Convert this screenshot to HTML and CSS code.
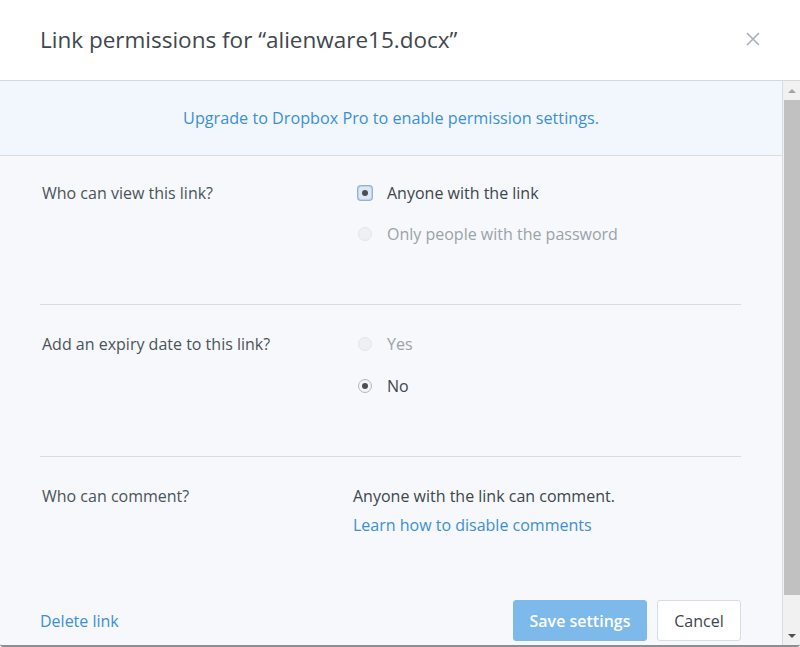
FILE: index.html
```html
<!DOCTYPE html>
<html>
<head>
<meta charset="utf-8">
<link rel="stylesheet" href="styles.css">
</head>
<body>
<div class="dialog">
  <header class="header">
    <h1 class="title">Link permissions for “alienware15.docx”</h1>
    <button class="close" aria-label="Close">
      <svg width="14" height="14" viewBox="0 0 14 14"><path d="M1 1L13 13M13 1L1 13" stroke="#a9b0b6" stroke-width="1.6" fill="none"/></svg>
    </button>
  </header>
  <div class="main">
    <div class="content">
      <div class="banner"><a class="link" href="#">Upgrade to Dropbox Pro to enable permission settings.</a></div>
      <div class="section section-first">
        <div class="label">Who can view this link?</div>
        <div class="options">
          <div class="option"><span class="radio checked focused"></span><span>Anyone with the link</span></div>
          <div class="option disabled"><span class="radio"></span><span>Only people with the password</span></div>
        </div>
      </div>
      <div class="section">
        <div class="label">Add an expiry date to this link?</div>
        <div class="options">
          <div class="option disabled"><span class="radio"></span><span>Yes</span></div>
          <div class="option"><span class="radio checked"></span><span>No</span></div>
        </div>
      </div>
      <div class="section section-last">
        <div class="label">Who can comment?</div>
        <div class="comment">
          <div>Anyone with the link can comment.</div>
          <a class="link learn" href="#">Learn how to disable comments</a>
        </div>
      </div>
      <div class="footer">
        <a class="link" href="#">Delete link</a>
        <div class="buttons">
          <button class="btn btn-primary">Save settings</button>
          <button class="btn btn-secondary">Cancel</button>
        </div>
      </div>
    </div>
    <div class="scrollbar">
      <div class="sb-arrow"><span class="tri up"></span></div>
      <div class="sb-thumb"></div>
      <div class="sb-track"></div>
      <div class="sb-arrow"><span class="tri down"></span></div>
    </div>
  </div>
</div>
</body>
</html>
```

FILE: styles.css
```css
* { box-sizing: border-box; }
html, body { margin: 0; padding: 0; }
body {
  font-family: "Open Sans", "Noto Sans", sans-serif;
  color: #3d464d;
  background: #ffffff;
}
.dialog {
  width: 800px;
  height: 647px;
  display: flex;
  flex-direction: column;
  border-bottom: 2px solid #8c8f92;
  border-radius: 0 0 3px 3px;
  overflow: hidden;
}
.header {
  height: 81px;
  flex: none;
  display: flex;
  align-items: center;
  justify-content: space-between;
  padding: 0 40px 2px 40px;
  border-bottom: 1px solid #d3d8dd;
  background: #fff;
}
.title {
  margin: 0;
  font-size: 22.5px;
  font-weight: 400;
  color: #40474d;
}
.close {
  border: 0;
  background: none;
  padding: 0;
  width: 14px;
  height: 14px;
  display: flex;
}
.main {
  flex: 1;
  display: flex;
  min-height: 0;
}
.content {
  flex: 1;
  display: flex;
  flex-direction: column;
  background: #f6f8fb;
  border-right: 1px solid #d6dce2;
}
.link {
  color: #3d8fd6;
  text-decoration: none;
  font-size: 16px;
}
.banner {
  height: 75px;
  flex: none;
  display: flex;
  align-items: center;
  justify-content: center;
  background: #f1f7fd;
  border-bottom: 1px solid #d6dde4;
  padding-bottom: 1px;
}
.banner .link { font-size: 16.2px; }
.section {
  display: grid;
  grid-template-columns: 313px 1fr;
  margin: 0 41px 0 40px;
  padding: 28px 0 59px 0;
  border-bottom: 1px solid #d8dde2;
  font-size: 16px;
  line-height: 22px;
}
.section-first { padding: 26px 0 59px 0; }
.section-first .options { gap: 19px; }
.section-last { border-bottom: 0; padding-bottom: 0; }
.label { color: #4b5359; padding-left: 2px; }
.options {
  display: flex;
  flex-direction: column;
  gap: 20px;
}
.option {
  display: flex;
  align-items: center;
  gap: 15px;
  padding-left: 5px;
  color: #3d464d;
}
.option.disabled { color: #9ba2a8; }
.radio {
  width: 14px;
  height: 14px;
  border-radius: 50%;
  border: 1px solid #dadde0;
  background: radial-gradient(circle at 50% 40%, #ffffff 0%, #eceef0 100%);
  position: relative;
  flex: none;
}
.option.disabled .radio { border-color: #e3e6e9; background: #eef0f2; }
.radio.checked { border-color: #b4b8bc; background: #f4f5f6; }
.radio.checked::after {
  content: "";
  position: absolute;
  left: 3px;
  top: 3px;
  width: 6px;
  height: 6px;
  border-radius: 50%;
  background: #4a4f54;
}
.radio.focused {
  box-shadow: 0 0 0 1px #8db3dc;
  border-radius: 3px;
  border-color: #c6d2de;
  background: #dde8f4;
}
.comment {
  display: flex;
  flex-direction: column;
  gap: 7px;
  color: #3d464d;
}
.learn { line-height: 22px; }
.footer {
  margin-top: auto;
  display: flex;
  align-items: center;
  justify-content: space-between;
  padding: 0 41px 4px 40px;
}
.buttons { display: flex; gap: 10px; }
.btn {
  height: 41px;
  border-radius: 3px;
  font-family: "Open Sans", "Noto Sans", sans-serif;
  font-size: 16px;
  padding: 0;
}
.btn-primary {
  width: 134px;
  background: #7db9ea;
  border: 1px solid #7db9ea;
  color: #fff;
  font-weight: 600;
}
.btn-secondary {
  width: 84px;
  background: #fff;
  border: 1px solid #d6dde3;
  color: #3d464d;
}
.scrollbar {
  width: 17px;
  flex: none;
  display: flex;
  flex-direction: column;
  background: #f1f1f1;
  padding-left: 1px;
}
.sb-arrow {
  height: 19px;
  flex: none;
  display: flex;
  align-items: center;
  justify-content: center;
}
.sb-thumb {
  height: 495px;
  flex: none;
  background: #c1c1c1;
}
.sb-track { flex: 1; }
.tri {
  width: 0;
  height: 0;
  border-left: 4px solid transparent;
  border-right: 4px solid transparent;
}
.tri.up { border-bottom: 4px solid #a3a3a3; }
.tri.down { border-top: 4px solid #505050; }
```
